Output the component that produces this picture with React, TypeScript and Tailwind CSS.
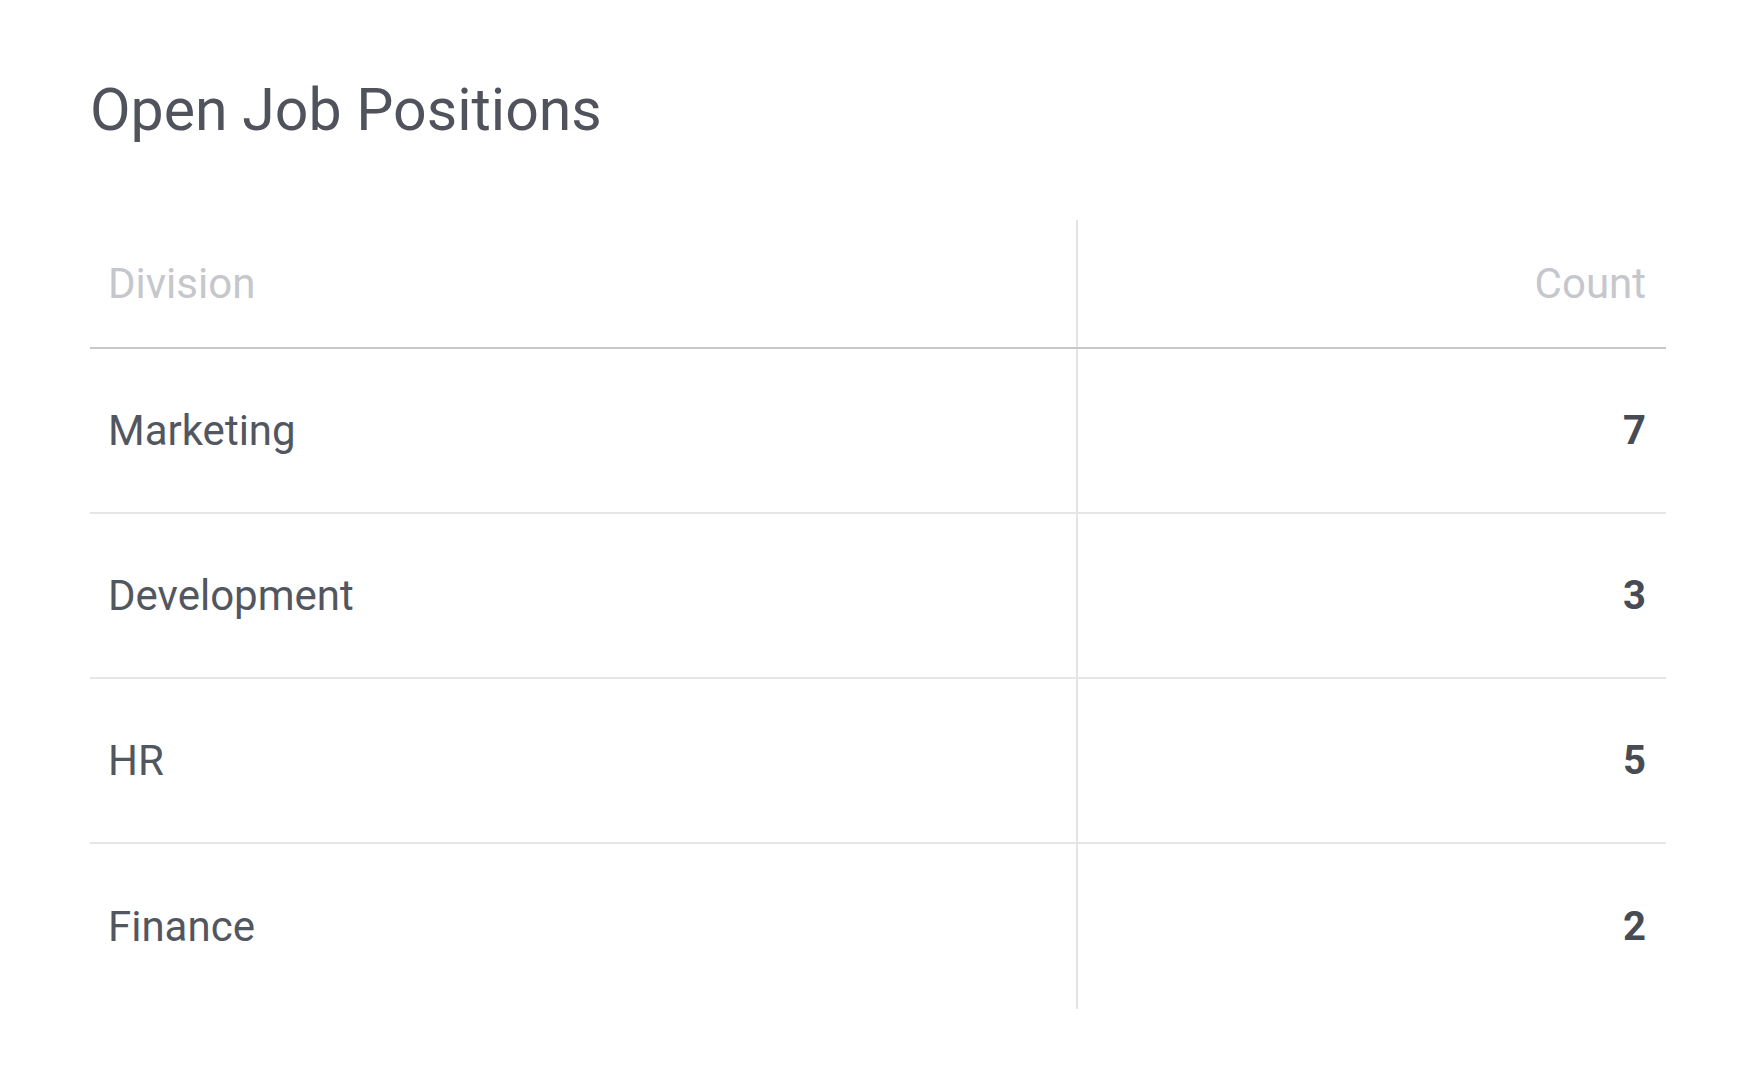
const rows = [
  { division: 'Marketing', count: 7 },
  { division: 'Development', count: 3 },
  { division: 'HR', count: 5 },
  { division: 'Finance', count: 2 },
]

export default function App() {
  return (
    <div className="min-h-screen bg-white pl-[90px] pt-[81px] font-['Roboto',sans-serif]">
      <h1 className="text-[59px] leading-[58px] font-normal text-[#50535c]">
        Open Job Positions
      </h1>

      <div className="mt-[81px] w-[1576px]">
        {/* header */}
        <div className="grid grid-cols-[988px_588px] border-b-2 border-[#c8c8c8]">
          <div className="flex h-[127px] items-center border-r-2 border-[#e4e4e4] pl-[18px] text-[42px] text-[#c5c7cc]">
            Division
          </div>
          <div className="flex h-[127px] items-center justify-end pr-[20px] text-[42px] text-[#c5c7cc]">
            Count
          </div>
        </div>

        {rows.map((row, i) => (
          <div
            key={row.division}
            className={`grid grid-cols-[988px_588px] ${
              i < rows.length - 1 ? 'border-b-2 border-[#e6e6e6]' : ''
            }`}
          >
            <div
              className={`flex items-center border-r-2 border-[#e4e4e4] pl-[18px] text-[42px] text-[#52565f] ${
                i < rows.length - 1 ? 'h-[163px]' : 'h-[165px]'
              }`}
            >
              {row.division}
            </div>
            <div className="flex items-center justify-end pr-[20px] text-[40px] font-bold text-[#474b54]">
              {row.count}
            </div>
          </div>
        ))}
      </div>
    </div>
  )
}
